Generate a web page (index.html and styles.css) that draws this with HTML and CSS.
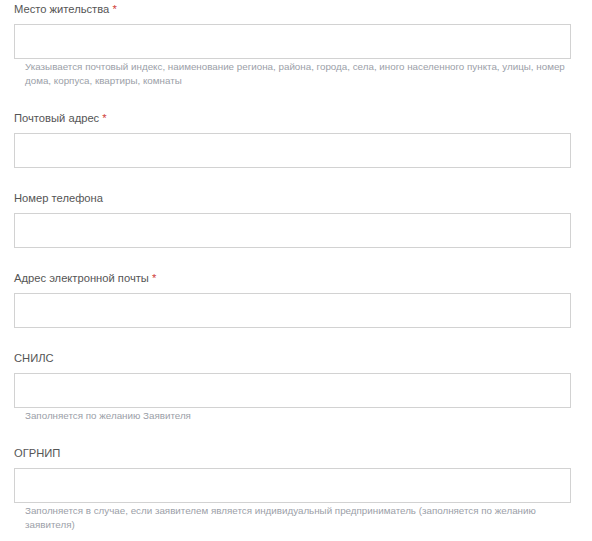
FILE: index.html
```html
<!DOCTYPE html>
<html>
<head>
    <title>Анкета заявителя</title>
    <link rel="stylesheet" href="styles.css">
</head>
<body>
    <form class="form">
        <div class="form-group">
            <label for="residence">Место жительства <span class="req">*</span></label>
            <input type="text" id="residence">
            <div class="hint">Указывается почтовый индекс, наименование региона, района, города, села, иного населенного пункта, улицы, номер дома, корпуса, квартиры, комнаты</div>
        </div>

        <div class="form-group">
            <label for="postAddress">Почтовый адрес <span class="req">*</span></label>
            <input type="text" id="postAddress">
        </div>

        <div class="form-group">
            <label for="phone">Номер телефона</label>
            <input type="text" id="phone">
        </div>

        <div class="form-group">
            <label for="email">Адрес электронной почты <span class="req">*</span></label>
            <input type="text" id="email">
        </div>

        <div class="form-group">
            <label for="snils">СНИЛС</label>
            <input type="text" id="snils">
            <div class="hint">Заполняется по желанию Заявителя</div>
        </div>

        <div class="form-group">
            <label for="ogrnip">ОГРНИП</label>
            <input type="text" id="ogrnip">
            <div class="hint">Заполняется в случае, если заявителем является индивидуальный предприниматель (заполняется по желанию заявителя)</div>
        </div>
    </form>
</body>
</html>
```

FILE: styles.css
```css
body {
    font-family: "Liberation Sans", Arial, sans-serif;
    margin: 0;
    background-color: #fff;
}
.form {
    width: 557px;
    padding: 1px 0 0 14px;
}
.form-group {
    margin-bottom: 22px;
}
label {
    display: block;
    font-size: 11.2px;
    line-height: 17px;
    color: #555;
    margin-bottom: 6px;
}
.req {
    color: #d0413c;
}
input[type="text"] {
    display: block;
    width: 100%;
    height: 35px;
    border: 1px solid #d2d2d2;
    border-radius: 0;
    box-sizing: border-box;
    margin: 0;
    outline: none;
}
.hint {
    font-size: 9.8px;
    line-height: 14px;
    color: #9ba0a8;
    padding-left: 11px;
    margin-top: 1px;
}
```
